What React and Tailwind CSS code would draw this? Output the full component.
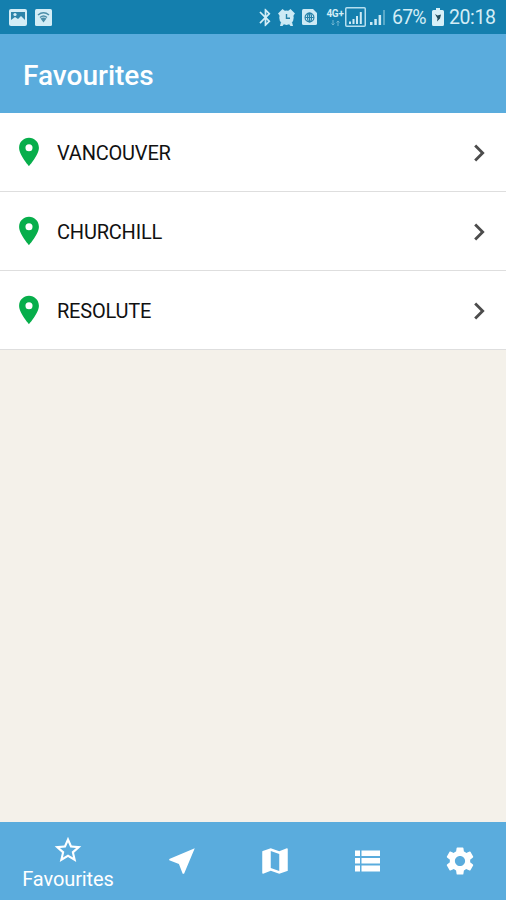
import { useState } from "react";
import {
  MdBluetooth,
  MdChevronRight,
  MdMap,
  MdNearMe,
  MdPlace,
  MdSettings,
  MdStarBorder,
} from "react-icons/md";

const places = ["VANCOUVER", "CHURCHILL", "RESOLUTE"];

const ListIcon = ({ size }) => (
  <svg width={size} height={size} viewBox="0 0 34 34" fill="currentColor">
    <path d="M5 6.500h5v5.500H5zM5 14h5v5.500H5zM5 21.500h5v6H5zM11.500 6.500H30v5.500H11.500zM11.500 14H30v5.500H11.500zM11.500 21.500H30v6H11.500z" />
  </svg>
);

const tabs = [
  { id: "nearby", label: "Nearby", Icon: MdNearMe },
  { id: "map", label: "Map", Icon: MdMap },
  { id: "list", label: "List", Icon: ListIcon },
  { id: "settings", label: "Settings", Icon: MdSettings },
];

const PictureIcon = () => (
  <svg width="18" height="17" viewBox="0 0 18 17" className="shrink-0">
    <rect width="18" height="17" rx="2" fill="#d3edf6" />
    <path d="M2 3h14v8l-4-4-3 3-3-2-4 3z" fill="#2c84a9" />
    <circle cx="6" cy="5.500" r="1.600" fill="#d3edf6" />
  </svg>
);

const WifiBoxIcon = () => (
  <svg width="17" height="17" viewBox="0 0 17 17" className="shrink-0">
    <rect width="17" height="17" rx="1.500" fill="#d3edf6" />
    <path d="M3 6q5.500-4.500 11 0M5 8.500q3.500-3 7 0" fill="none" stroke="#4b8ea8" strokeWidth="1.500" />
    <path d="M5.500 9.500q3-2 6 0l-3 4z" fill="#4b8ea8" />
  </svg>
);

const AlarmIcon = () => (
  <svg width="17" height="17" viewBox="0 0 17 17" className="shrink-0">
    <g fill="#cdeaf5">
      <circle cx="8.500" cy="8.700" r="7.200" />
      <path d="M0 4.500L4.500 0 7 2 2 7zM17 4.500L12.500 0 10 2l5 5zM2 17l1-4 3 2-1.500 2zM15 17l-1-4-3 2 1.500 2z" />
    </g>
    <path d="M8.500 5v4.200h3.500" fill="none" stroke="#2581a8" strokeWidth="1.400" />
  </svg>
);

const SimIcon = () => (
  <svg width="15" height="16" viewBox="0 0 15 16" className="shrink-0">
    <path d="M1.500 0H11l4 4v10.500q0 1.500-1.500 1.500h-12Q0 16 0 14.500v-13Q0 0 1.500 0z" fill="#cdeaf5" />
    <g fill="none" stroke="#2581a8" strokeWidth="1.200">
      <circle cx="7.500" cy="8.500" r="4.400" />
      <path d="M3.300 8.500h8.400M7.500 4.300v8.400" />
      <ellipse cx="7.500" cy="8.500" rx="2" ry="4.400" />
    </g>
  </svg>
);

const SignalBars = ({ boxed }) => (
  <svg width={boxed ? 21 : 16} height="20" viewBox={boxed ? "0 0 21 20" : "0 0 16 20"} className="shrink-0">
    {boxed ? (
      <>
        <rect x="0.750" y="0.750" width="19.500" height="18.500" rx="1" fill="none" stroke="#b5dff0" strokeWidth="1.500" />
        <path d="M4 14.500h2V17H4zM7.500 12h2v5h-2zM11 9h2v8h-2zM14.800 5h2v12h-2z" fill="#cdeaf5" />
      </>
    ) : (
      <>
        <path d="M0 15h2.500v3H0zM4.300 12h2.500v6H4.300zM8.600 8h2.500v10H8.600z" fill="#cdeaf5" />
        <path d="M13 3h2v15h-2z" fill="#5aa9c8" />
      </>
    )}
  </svg>
);

const BatteryIcon = () => (
  <svg width="12" height="18" viewBox="0 0 12 18" className="shrink-0">
    <path d="M4 0h4v2h2.500Q12 2 12 3.500v13q0 1.500-1.500 1.500h-9Q0 18 0 16.500v-13Q0 2 1.500 2H4z" fill="#d8f0f8" />
    <path d="M3 6l2.500 1.500L9 6.500l-1 4-3 3 .5-3z" fill="#234c5c" />
  </svg>
);

const StatusBar = () => (
  <div className="flex h-[34px] items-center bg-[#147fae] pl-[9px] text-[20px] text-[#d3edf6]">
    <PictureIcon />
    <div className="ml-[8px]">
      <WifiBoxIcon />
    </div>
    <div className="ml-auto flex h-full items-center pr-[10px]">
      <MdBluetooth size={21} className="mr-[2px] stroke-current" />
      <AlarmIcon />
      <div className="ml-[7px]">
        <SimIcon />
      </div>
      <div className="ml-[9px] flex w-[18px] flex-col items-center font-bold">
        <span className="text-[10px] leading-[9px] tracking-[-0.3px]">4G+</span>
        <svg width="9" height="6" viewBox="0 0 9 6" fill="none" stroke="#6fb5d1" className="mt-[2px]">
          <path d="M2 0v5M0.500 3.500L2 5l1.500-1.500M7 6V1M5.500 2.500L7 1l1.500 1.500" />
        </svg>
      </div>
      <div className="ml-[1px]">
        <SignalBars boxed />
      </div>
      <div className="ml-[4px]">
        <SignalBars />
      </div>
      <span className="ml-[6px] w-[35px] whitespace-nowrap pt-[1px] text-[19.5px] tracking-[-0.8px]">67%</span>
      <div className="ml-[5px] mr-[5px]">
        <BatteryIcon />
      </div>
      <span className="w-[47px] whitespace-nowrap pt-[1px] text-[19.5px] tracking-[-0.4px]">20:18</span>
    </div>
  </div>
);

const PlaceRow = ({ name }) => (
  <li className="flex h-[79px] cursor-pointer items-center border-b border-[#dedede] bg-white pl-[11.500px] pr-[10px]">
    <MdPlace size={34} className="shrink-0 text-[#07ae4b]" />
    <span className="ml-[11.500px] pt-[2px] text-[20px] leading-none tracking-[-0.2px] text-[#111]">{name}</span>
    <MdChevronRight size={34} className="relative top-[1px] ml-auto shrink-0 text-[#4c4c4c]" />
  </li>
);

const TabBar = ({ active, onChange }) => (
  <nav className="flex h-[78px] bg-[#5aacdd] text-white">
    <button onClick={() => onChange("favourites")} className="flex w-[136px] flex-col items-center pt-[12px]">
      <MdStarBorder size={32} />
      <span className="mt-[2px] text-[20px] leading-[22px] tracking-[-0.1px]">Favourites</span>
    </button>
    {tabs.map(({ id, label, Icon }) => (
      <button
        key={id}
        aria-label={label}
        aria-pressed={active === id}
        onClick={() => onChange(id)}
        className="flex flex-1 items-center justify-center"
      >
        <Icon size={34} />
      </button>
    ))}
  </nav>
);

const App = () => {
  const [active, setActive] = useState("favourites");

  return (
    <div className="flex h-[900px] w-full flex-col overflow-hidden bg-[#f4f1ea] font-[Roboto,sans-serif]">
      <StatusBar />
      <header className="flex h-[79px] items-center bg-[#5aacdd] px-[23px]">
        <h1 className="pt-[4px] text-[28px] font-medium leading-none text-white">Favourites</h1>
      </header>
      <ul className="flex-1">
        {places.map((name) => (
          <PlaceRow key={name} name={name} />
        ))}
      </ul>
      <TabBar active={active} onChange={setActive} />
    </div>
  );
};

export default App;
